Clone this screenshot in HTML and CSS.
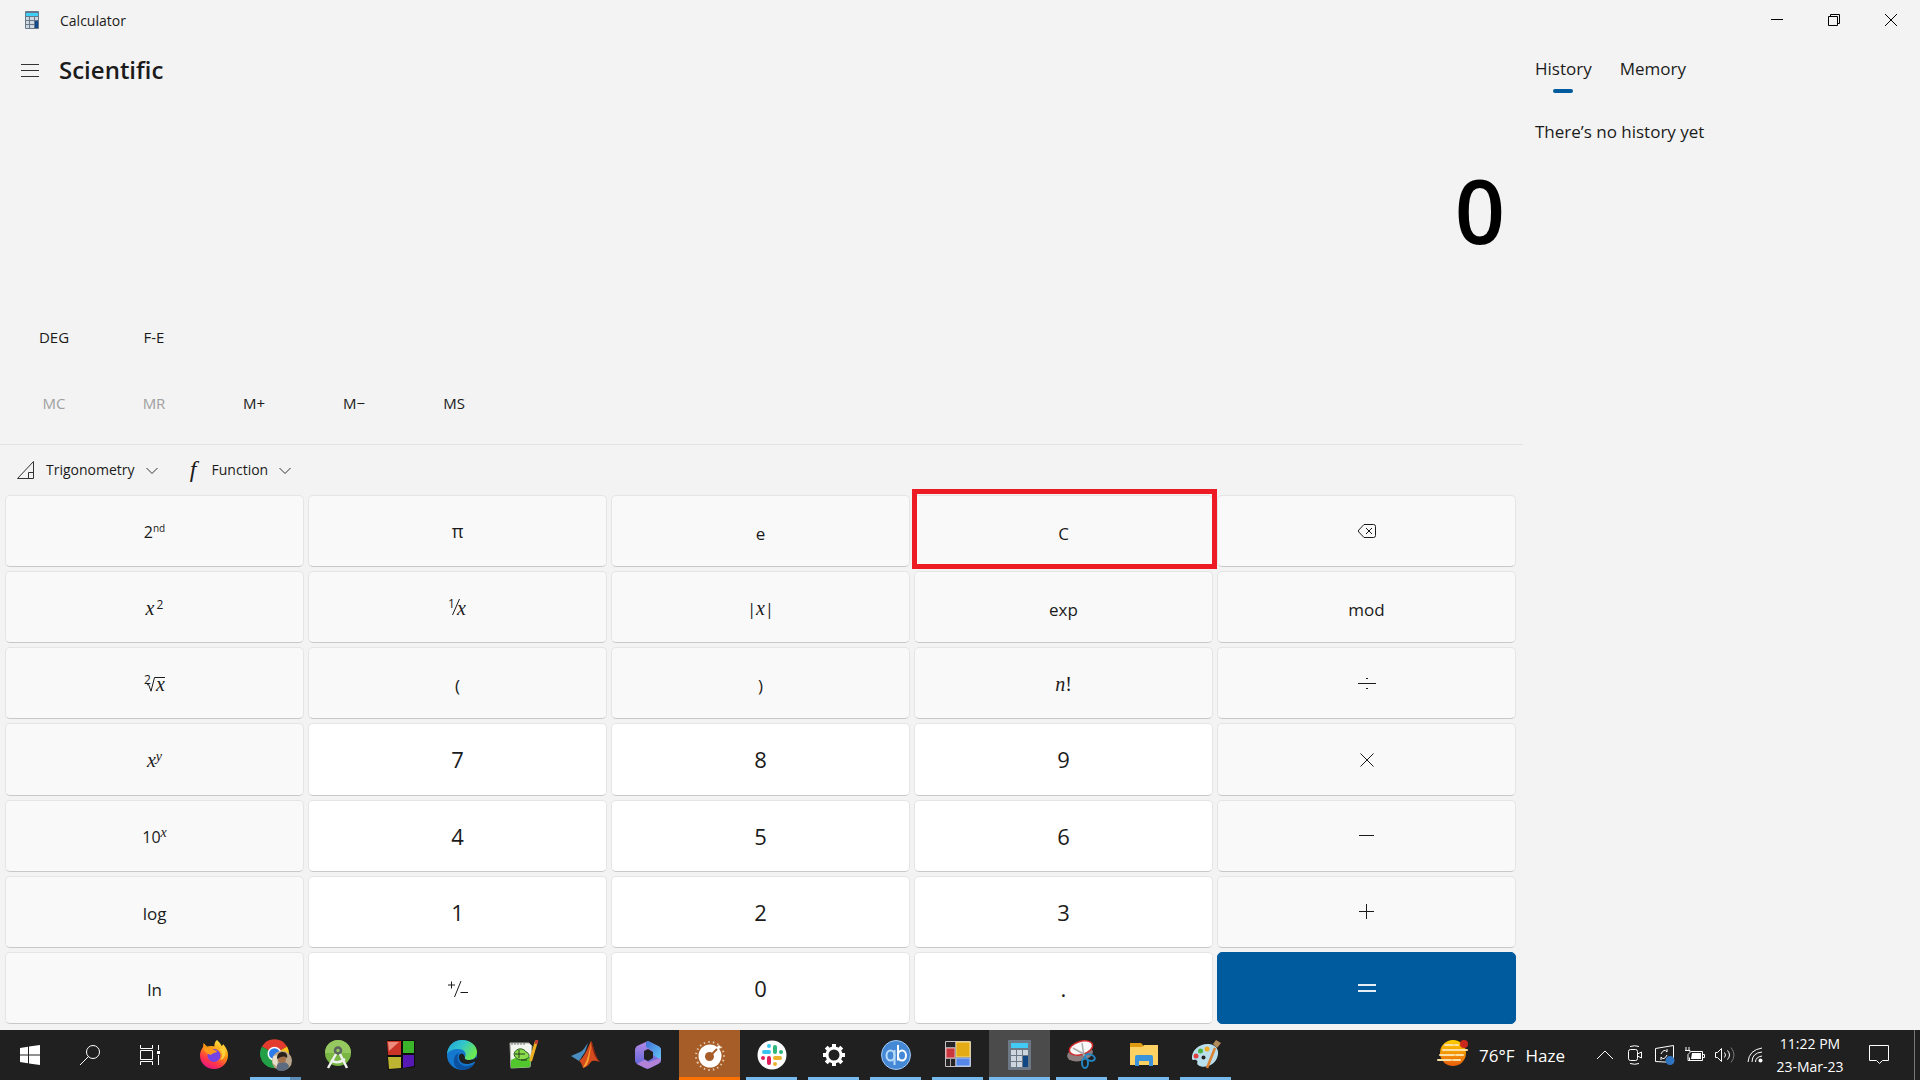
FILE: index.html
```html
<!DOCTYPE html>
<html lang="en">
<head>
<meta charset="utf-8">
<title>Calculator</title>
<link rel="stylesheet" href="styles.css">
</head>
<body>
<div class="app">
  <header class="titlebar">
    <svg class="app-icon" width="14" height="18" viewBox="0 0 14 18">
      <rect width="14" height="18" rx="1" fill="#66788a"/>
      <rect x="1" y="2" width="12" height="3" fill="#3fd0fa"/>
      <path d="M1 6h3v3H1zM5 6h4v3H5zM10 6h3v3h-3zM1 10h3v3H1zM5 10h4v3H5zM1 14h3v3H1zM5 14h4v3H5z" fill="#cfd8e0"/>
      <path d="M10 10h3v7h-3z" fill="#124a8c"/>
    </svg>
    <span class="app-name">Calculator</span>
    <div class="window-controls">
      <button class="window-btn" aria-label="Minimize"><svg width="12" height="12" viewBox="0 0 12 12"><path d="M0 5.500h12"/></svg></button>
      <button class="window-btn" aria-label="Restore"><svg width="12" height="12" viewBox="0 0 12 12"><path d="M.5 2.500h9v9h-9zM2.500 2.500v-2h9v9h-2"/></svg></button>
      <button class="window-btn" aria-label="Close"><svg width="12" height="12" viewBox="0 0 12 12"><path d="M0 0l12 12M12 0L0 12"/></svg></button>
    </div>
  </header>

  <div class="content">
    <main class="calculator">
      <div class="nav">
        <button class="menu-btn" aria-label="Open navigation"><svg width="18" height="14" viewBox="0 0 18 14"><path d="M0 1.500h18M0 7.500h18M0 13.500h18"/></svg></button>
        <h1 class="mode">Scientific</h1>
      </div>
      <output class="display">0</output>
      <div class="toggles">
        <button class="flat-btn">DEG</button>
        <button class="flat-btn">F-E</button>
      </div>
      <div class="memory-row">
        <button class="flat-btn" disabled>MC</button>
        <button class="flat-btn" disabled>MR</button>
        <button class="flat-btn">M+</button>
        <button class="flat-btn">M−</button>
        <button class="flat-btn">MS</button>
      </div>
      <div class="menus">
        <button class="menu-drop">
          <svg width="19" height="19" viewBox="0 0 19 19"><path d="M1.500 18.500h16v-17zM12.500 18v-5.500h5"/></svg>
          Trigonometry
          <svg class="chevron" width="12" height="8" viewBox="0 0 12 8"><path d="M.5 1l5.500 5.500L11.500 1"/></svg>
        </button>
        <button class="menu-drop">
          <span class="fn">f</span>
          Function
          <svg class="chevron" width="12" height="8" viewBox="0 0 12 8"><path d="M.5 1l5.500 5.500L11.500 1"/></svg>
        </button>
      </div>
      <div class="keypad">
        <button class="key math"><span>2<sup class="tiny">nd</sup></span></button>
        <button class="key pi">π</button>
        <button class="key word">e</button>
        <button class="key word marked">C</button>
        <button class="key" aria-label="Backspace"><svg width="18" height="14" viewBox="0 0 18 14"><path d="M6 .5h9.500a2 2 0 0 1 2 2v9a2 2 0 0 1-2 2H6L.8 8a1.500 1.500 0 0 1 0-2zM8 4l6 6M14 4l-6 6"/></svg></button>

        <button class="key math"><span><i>x</i><sup>2</sup></span></button>
        <button class="key" aria-label="Reciprocal"><svg class="formula" width="20" height="20" viewBox="0 0 20 20"><text class="small" x="0" y="11">1</text><path d="M4.500 18L11.500 2"/><text class="var" x="9" y="18">x</text></svg></button>
        <button class="key math"><span>|<i>x</i>|</span></button>
        <button class="key word">exp</button>
        <button class="key word">mod</button>

        <button class="key" aria-label="Square root"><svg class="formula" width="22" height="20" viewBox="0 0 22 20"><text class="small" x="0" y="11">2</text><path d="M3 12l1.500-.8 2.500 7L10.500 4.500H21"/><text class="var" x="12" y="18">x</text></svg></button>
        <button class="key word">(</button>
        <button class="key word">)</button>
        <button class="key math"><span class="factorial"><i>n</i>!</span></button>
        <button class="key" aria-label="Divide"><svg width="18" height="18" viewBox="0 0 18 18"><path d="M0 9.500h18M8 4.500h2M8 14.500h2"/></svg></button>

        <button class="key math"><span><i>x</i><sup class="var-sup">y</sup></span></button>
        <button class="key digit">7</button>
        <button class="key digit">8</button>
        <button class="key digit">9</button>
        <button class="key" aria-label="Multiply"><svg width="18" height="18" viewBox="0 0 18 18"><path d="M2.500 3.500l13 13M15.500 3.500l-13 13"/></svg></button>

        <button class="key math"><span>10<sup class="var-sup">x</sup></span></button>
        <button class="key digit">4</button>
        <button class="key digit">5</button>
        <button class="key digit">6</button>
        <button class="key" aria-label="Minus"><svg width="18" height="18" viewBox="0 0 18 18"><path d="M1 8.500h15"/></svg></button>

        <button class="key word">log</button>
        <button class="key digit">1</button>
        <button class="key digit">2</button>
        <button class="key digit">3</button>
        <button class="key" aria-label="Plus"><svg width="18" height="18" viewBox="0 0 18 18"><path d="M1 8.500h15M8.500 1v15"/></svg></button>

        <button class="key word">ln</button>
        <button class="key digit" aria-label="Change sign"><svg class="formula" width="22" height="20" viewBox="0 0 22 20"><path d="M1 7h7M4.500 3.500v7M7.500 19L14 3M13.500 14.500h7.500"/></svg></button>
        <button class="key digit">0</button>
        <button class="key digit">.</button>
        <button class="key equals" aria-label="Equals"><svg width="18" height="18" viewBox="0 0 18 18"><path d="M0 6h18M0 12h18"/></svg></button>
      </div>
    </main>

    <aside class="side">
      <div class="tabs" role="tablist">
        <button class="tab active" role="tab" aria-selected="true">History</button>
        <button class="tab" role="tab" aria-selected="false">Memory</button>
      </div>
      <p class="empty">There’s no history yet</p>
    </aside>
  </div>
</div>

<footer class="taskbar">
  <div class="system">
    <button class="sys-btn" aria-label="Start"><svg width="20" height="20" viewBox="0 0 20 20"><path d="M0 3l8-1.200V9.500H0zM9 1.600L20 0v9.500H9zM0 10.500h8v7.700L0 17zM9 10.500h11V20L9 18.400z" fill="#fff"/></svg></button>
    <button class="sys-btn" aria-label="Search"><svg class="line" width="20" height="20" viewBox="0 0 20 20"><circle cx="13" cy="7" r="6.500"/><path d="M8.500 11.500L0 20"/></svg></button>
    <button class="sys-btn" aria-label="Task view"><svg class="line" width="20" height="20" viewBox="0 0 20 20"><path d="M.5 0v3.500h12V0M.5 5.500h12v9H.5zM.5 20v-3.500h12V20M18.500 0v5M18.500 10v10"/><path d="M17 6h3v3h-3z" fill="#fff" stroke="none"/></svg></button>
  </div>
  <div class="apps">
    <button class="task" aria-label="Firefox"><svg width="30" height="30" viewBox="0 0 30 30">
      <defs><linearGradient id="ff" x1=".8" y1="0" x2=".3" y2="1"><stop offset="0" stop-color="#fff44f"/><stop offset=".4" stop-color="#ff980e"/><stop offset=".75" stop-color="#ff3647"/><stop offset="1" stop-color="#e31587"/></linearGradient></defs>
      <path d="M18 0c2 2 4 4 4.500 6 1-.5 1.500-1 1.500-2 3 3 5 7 5 11 0 8-6 14-14 14S1 23 1 15.500C1 12 2.500 9 4 7l.5-4L8 6.500c3-1 6-.5 7.500 0C15 4 16 1.500 18 0z" fill="url(#ff)"/>
      <circle cx="15" cy="15.500" r="6.500" fill="#7542e5"/><path d="M4 8c4-2 9 0 11 2 2 0 3 1 3 2-2 1-5 1-6 3-3-1-6-2-8-7z" fill="#ff9a1c"/><path d="M20 9c4 3 4 8 1 11 5-1 7-7 4-12z" fill="#ffd23c"/></svg></button>
    <button class="task running grouped" aria-label="Chrome"><svg width="32" height="32" viewBox="0 0 32 32">
      <path d="M14.500 14.700L1.900 7.500a14.500 14.500 0 0 1 25.200 0z" fill="#e33b2e"/><path d="M14.500 14.700L1.900 7.500a14.500 14.500 0 0 0 12.600 21.700z" fill="#23a047"/><path d="M14.500 14.700l12.600-7.200a14.500 14.500 0 0 1-12.600 21.700z" fill="#fcc31e"/>
      <circle cx="14.500" cy="14.700" r="7" fill="#fff"/><circle cx="14.500" cy="14.700" r="5.500" fill="#2c7bea"/>
      <circle cx="22" cy="21.700" r="10" fill="#b9a58b"/><path d="M12.500 24a10 10 0 0 1 1-7l4-1v12z" fill="#e8dfc9"/><path d="M17 31c-1-5 1-8 5-8s7 2 7 5c-3 4-8 5-12 3z" fill="#5d6b80"/><circle cx="22" cy="20" r="4" fill="#a2724c"/><path d="M17 20c0-6 3-7 6-7s5 3 4 6c-4-3-6-1-10 1z" fill="#2a211c"/></svg></button>
    <button class="task" aria-label="Android Studio"><svg width="30" height="30" viewBox="0 0 30 30">
      <circle cx="15" cy="13" r="13" fill="#79b644"/><path d="M2 13a13 13 0 0 1 26 0z" fill="#95c95f"/>
      <circle cx="15" cy="10.500" r="3" fill="none" stroke="#5c6360" stroke-width="2.500"/><path d="M13 14L5 28M17 14l7 14M8 20c4 3 9 3 14-1" fill="none" stroke="#eef1ee" stroke-width="2.500"/></svg></button>
    <button class="task" aria-label="Color blocks"><svg width="30" height="30" viewBox="0 0 30 30">
      <path d="M2 0h28v27L3 30z" fill="#0d0d0d"/><path d="M2 1h14v14H3z" fill="#cb3327"/><path d="M18 1h11v12H18z" fill="#3bb32b"/><path d="M3 17h13v11L4 29z" fill="#bdb531"/><path d="M18 15h11v11l-11 2z" fill="#5619b4"/><path d="M3 2l11 0-10 9z" fill="#ed8b7c"/></svg></button>
    <button class="task" aria-label="Edge"><svg width="30" height="30" viewBox="0 0 30 30">
      <defs><linearGradient id="ed" x1="0" y1="0" x2="1" y2=".5"><stop offset="0" stop-color="#219fd9"/><stop offset=".5" stop-color="#32c5cc"/><stop offset="1" stop-color="#6ce851"/></linearGradient></defs>
      <circle cx="15" cy="15" r="15" fill="#1478cf"/><path d="M0 14C1 5 7 0 15 0c9 0 15 6 15 12 0 5-4 8-8 8-3 0-5-1-4-3 2-3 0-8-7-8C6 9 2 11 0 14z" fill="url(#ed)"/>
      <path d="M12 13c-3 4-1 12 6 13 4 .5 7-1 9.500-2.500C25 28 20 30 15 30 9 29 6 25 7 19c.5-3 2-5 5-6z" fill="#0c50a0"/><path d="M18 17c-2-5-5-4-6-1-1 6 6 11 15 6 1-.5 1.500 0 .5 1.500L31 21l-2-4c-2 3-5 3-8 3-2 0-4-1-3-3z" fill="#1f201f"/></svg></button>
    <button class="task" aria-label="Notepad++"><svg width="30" height="30" viewBox="0 0 30 30">
      <path d="M1 3h19l3 3-2 21-19 1z" fill="#f3f5ef" stroke="#b0b4ab"/><path d="M2 20c6-4 12-3 20-3l-1 10-19 1z" fill="#52c62d"/><path d="M3 3v2M6 3v2M9 3v2M12 3v2M15 3v2" stroke="#777"/><path d="M5 14c2-7 10-6 12-2 4 1 4 6 0 7-4 2-11 1-12-5z" fill="#8bdc4b" stroke="#2c5923"/><path d="M6 14h10M10 10v8M12 20h6" stroke="#243a20"/><path d="M27.500 1L21.500 21" stroke="#efb023" stroke-width="3"/><path d="M28 0l-1 4" stroke="#c13c34" stroke-width="3"/></svg></button>
    <button class="task" aria-label="MATLAB"><svg width="30" height="30" viewBox="0 0 30 30">
      <path d="M0 16l9-4c3-1 5-5 8-9l-3 9-6 9z" fill="#4a8dc0"/><path d="M8 21c4-2 9-13 12-20 2 1 4 17 9 21-4-1-7-2-9 0-3 4-5 5-8 6-1-3-2-6-4-7z" fill="#d64b1d"/><path d="M20 1c-1 9-3 18-8 27 5-2 7-8 8-27z" fill="#f6a534"/><path d="M20 1c2 1 4 17 9 21-5-4-7-9-9-21z" fill="#7e1e15"/></svg></button>
    <button class="task" aria-label="Microsoft 365"><svg width="30" height="30" viewBox="0 0 30 30">
      <defs><linearGradient id="ms" x1="0" y1="0" x2="0" y2="1"><stop offset="0" stop-color="#b58be6"/><stop offset="1" stop-color="#5560d8"/></linearGradient><linearGradient id="mt" x1="0" y1="0" x2="1" y2="1"><stop offset="0" stop-color="#3f6fd6"/><stop offset="1" stop-color="#63c8f5"/></linearGradient></defs>
      <path d="M15 1l10 5c2 1 3 2 3 4v10c0 2-1 3-3 4l-8 4c-2 1-3 1-5 0l-8-4c-1-1-2-2-2-4V10c0-2 1-3 2-4z" fill="url(#ms)"/><path d="M15 1l10 5c2 1 3 2 3 4v10l-8-5V11l-7-4V2z" fill="url(#mt)"/><path d="M4 24l7-4 5 2 11-4c2 3 0 5-2 6l-8 4c-2 1-3 1-5 0z" fill="#b182d8"/><path d="M11 11l4-2 5 3v6l-5 3-4-2z" fill="#1f201f"/></svg></button>
    <button class="task alert" aria-label="Timer"><svg width="30" height="30" viewBox="0 0 30 30">
      <circle cx="15" cy="17" r="14" fill="none" stroke="#e3c3a6" stroke-width="2" stroke-dasharray="1.500 3.100" pathLength="88" transform="rotate(150 15 17)"/><circle cx="15" cy="17" r="11.500" fill="#fff"/><path d="M15 17L25 7" stroke="#fff" stroke-width="3"/><circle cx="14.500" cy="17.500" r="4.500" fill="#a65d28"/><path d="M15 17l7-7" stroke="#a65d28" stroke-width="2"/></svg></button>
    <button class="task running" aria-label="Slack"><svg width="30" height="30" viewBox="0 0 30 30">
      <circle cx="15" cy="15" r="14.500" fill="#fff"/><g fill="none" stroke-width="4" stroke-linecap="round"><path d="M7 12h5M12 6h0" stroke="#36c5f0"/><path d="M18 7v5M24 12h0" stroke="#2eb67d"/><path d="M18 18h5M18 24h0" stroke="#ecb22e"/><path d="M12 18v5M6 18h0" stroke="#e01e5a"/></g></svg></button>
    <button class="task running" aria-label="Settings"><svg width="30" height="30" viewBox="0 0 30 30">
      <g fill="none" stroke="#fff"><circle cx="15" cy="15" r="7" stroke-width="3"/><path d="M15 4v4M15 22v4M4 15h4M22 15h4M7.200 7.200L10 10M20 20l2.800 2.800M7.200 22.800L10 20M20 10l2.800-2.800" stroke-width="4"/></g></svg></button>
    <button class="task running" aria-label="qBittorrent"><svg width="30" height="30" viewBox="0 0 30 30">
      <circle cx="15" cy="15" r="14.500" fill="#4588d6" stroke="#a4caf2"/><g fill="none" stroke-width="2"><ellipse cx="9.500" cy="15.500" rx="4" ry="5" stroke="#b8dbf8"/><path d="M13.500 10v15" stroke="#b8dbf8"/><path d="M17 5v15.500" stroke="#fff"/><ellipse cx="21" cy="15.500" rx="4" ry="5" stroke="#fff"/></g></svg></button>
    <button class="task running" aria-label="Layout tool"><svg width="30" height="30" viewBox="0 0 30 30">
      <path d="M2.500 1.500h25v25h-25z" fill="#252323" stroke="#c5c1c5"/><path d="M3 8h9v10H3z" fill="#c9363d" stroke="#e9b4b4"/><path d="M13 2h14v15H13z" fill="#e3ac16" stroke="#f0dc8e"/><path d="M13 18h14v8H13z" fill="#5587eb" stroke="#b5cbf5"/><path d="M12.500 2v24M3 18.500h9M7.500 19v7M3 7.500h9" stroke="#a5a1a5"/></svg></button>
    <button class="task running current" aria-label="Calculator"><svg width="30" height="30" viewBox="0 0 30 30">
      <rect x="3" width="23" height="30" rx="1" fill="#6d7986"/><path d="M6 3h17v5H6z" fill="#42c9f4"/><path d="M6 10h5v5H6zM12 10h5v5h-5zM18 10h5v5h-5zM6 16h5v5H6zM12 16h5v5h-5zM6 22h5v5H6zM12 22h5v5h-5z" fill="#cdd6de"/><path d="M18 16h5v11h-5z" fill="#114685"/></svg></button>
    <button class="task running" aria-label="Snipping Tool"><svg width="30" height="30" viewBox="0 0 30 30">
      <ellipse cx="13" cy="14" rx="13" ry="7" fill="#8b7d7e" transform="rotate(-12 13 14)"/><ellipse cx="14" cy="8" rx="12" ry="6.500" fill="#f8f8f8" stroke="#cf2d2d" stroke-width="1.500" transform="rotate(-17 14 8)"/><path d="M15 3l2 13M6 8l14 8" stroke="#aaa" stroke-width="1.500"/><g fill="none" stroke="#2385c3" stroke-width="2"><ellipse cx="23" cy="17.500" rx="5" ry="3" transform="rotate(20 23 17.500)"/><ellipse cx="18" cy="23" rx="3" ry="5"/></g></svg></button>
    <button class="task running" aria-label="File Explorer"><svg width="30" height="30" viewBox="0 0 30 30">
      <path d="M1 3h11l2 2v3H1z" fill="#e09b12"/><path d="M1 7h12l2-2h14v20H1z" fill="#fdd263"/><path d="M6 26v-9q0-2 2-2h14q2 0 2 2v9h-4v-5H10v5z" fill="#3994dc"/></svg></button>
    <button class="task running" aria-label="Paint"><svg width="30" height="30" viewBox="0 0 30 30">
      <path d="M1 19C0 10 9 3 18 4c8 1 11 7 8 14-3 8-14 11-19 7-2-2 1-4-2-5-1-1-3 1-4-1z" fill="#b9dfed"/><circle cx="5" cy="16" r="2.500" fill="#dd4140"/><circle cx="9.500" cy="11" r="2.500" fill="#4cb444"/><circle cx="16" cy="9" r="2.500" fill="#efac24"/><circle cx="12.500" cy="17.500" r="2" fill="#222"/><path d="M24 8l-8 20" stroke="#dd8031" stroke-width="2.500"/><path d="M22 4l3-4 5 3-4 5z" fill="#b38b5c"/></svg></button>
  </div>
  <div class="tray">
    <button class="weather">
      <svg width="30" height="30" viewBox="0 0 30 30"><defs><linearGradient id="sun" x1="0" y1="0" x2="0" y2="1"><stop offset="0" stop-color="#ffd000"/><stop offset="1" stop-color="#e85d0c"/></linearGradient></defs><circle cx="15" cy="13" r="13" fill="url(#sun)"/><path d="M7 5h8M17 5h3M5 10h24M2 15h14M18 15h7M0 20h13M15 20h7" stroke="#fae0a4" stroke-width="2" stroke-linecap="round"/><circle cx="26" cy="4" r="4" fill="#c9291d"/></svg>
      <span>76°F</span><span>Haze</span>
    </button>
    <button class="tray-btn" aria-label="Show hidden icons"><svg class="line" width="18" height="12" viewBox="0 0 18 12"><path d="M1 10l8-8 8 8"/></svg></button>
    <button class="tray-btn" aria-label="Meet now"><svg class="line" width="16" height="20" viewBox="0 0 16 20"><rect x="1.500" y="4.500" width="9" height="11" rx="2"/><path d="M10.500 9l4-2v6l-4-2M3 1.500q5-1.500 9 0M3 18.500q5 1.500 9 0"/></svg></button>
    <button class="tray-btn" aria-label="Windows Update"><svg class="line" width="22" height="20" viewBox="0 0 22 20"><path d="M1.500 3.500l18-3v17l-18-1zM7 9q3-6 6-2V4M13 10q-3 6-6 2v3"/><circle cx="16" cy="15.500" r="4.500" fill="#2f74c0" stroke="none"/></svg></button>
    <button class="tray-btn" aria-label="Battery"><svg class="line" width="20" height="16" viewBox="0 0 20 16"><path d="M5.500 4.500h12v9h-13v-3M17.500 7.500h2v3h-2M1 0v3M4 0v3M0 3.500h5v2l-2 2v6h3"/><path d="M7 6h9v6H6z" fill="#fff" stroke="none"/></svg></button>
    <button class="tray-btn" aria-label="Volume"><svg class="line" width="22" height="18" viewBox="0 0 22 18"><path d="M1.500 6.500h2l4-4v13l-4-4h-2zM10.500 6.500q2 2.500 0 5M13.500 4.500q4 4.500 0 9"/><path d="M17 1.500q6 7.500 0 15" stroke="#777"/></svg></button>
    <button class="tray-btn" aria-label="Network"><svg class="line" width="16" height="16" viewBox="0 0 16 16"><path d="M1 15Q2 3 15 1M5 15Q5 6 15 5M8.500 15q0-5 6.500-6" /><circle cx="13.500" cy="13.500" r="2" fill="#fff" stroke="none"/></svg></button>
    <button class="clock"><span>11:22 PM</span><span>23-Mar-23</span></button>
    <button class="notify" aria-label="Notifications"><svg class="line" width="20" height="20" viewBox="0 0 20 20"><path d="M.5.5h19v15h-6l-3 3-3-3h-7z"/></svg></button>
    <button class="show-desktop" aria-label="Show desktop"></button>
  </div>
</footer>
</body>
</html>
```
FILE: styles.css
```css
* { box-sizing: border-box; }

body {
  margin: 0;
  height: 100vh;
  display: flex;
  flex-direction: column;
  background: #f3f3f3;
  color: #1b1b1b;
  font-family: "Open Sans", "Noto Sans", sans-serif;
  font-size: 14px;
}

button {
  margin: 0;
  padding: 0;
  border: 0;
  background: none;
  color: inherit;
  font: inherit;
}

svg {
  display: block;
  flex: none;
  fill: none;
  overflow: visible;
}

.app {
  flex: 1;
  min-height: 0;
  display: flex;
  flex-direction: column;
}

/* Title bar */
.titlebar {
  height: 40px;
  display: flex;
  align-items: center;
  padding-left: 25px;
}
.app-name { margin-left: 21px; }
.window-controls { display: flex; margin: 0 1px 0 auto; }
.window-btn {
  width: 57px;
  height: 40px;
  display: grid;
  place-items: center;
}
.window-btn path { stroke: #000; }

.content { flex: 1; min-height: 0; display: flex; }
.calculator {
  flex: 1;
  min-width: 0;
  display: flex;
  flex-direction: column;
}

/* Mode heading */
.nav {
  height: 60px;
  display: flex;
  align-items: center;
  gap: 20px;
  padding-left: 21px;
}
.menu-btn path { stroke: #333; }
.mode {
  margin: 0;
  padding-bottom: 2px;
  font-size: 24px;
  font-weight: 600;
}

.display {
  height: 212px;
  padding: 50px 18px 0 0;
  color: #000;
  font-size: 88px;
  font-weight: 600;
  line-height: 120px;
  text-align: right;
}

.toggles, .memory-row {
  display: flex;
  align-items: center;
  padding-left: 4px;
  font-size: 15px;
}
.toggles { height: 50px; }
.memory-row {
  height: 83px;
  border-bottom: 1px solid #e3e3e3;
}
.flat-btn { width: 100px; height: 40px; }
.flat-btn:disabled { color: #a0a0a0; }

.menus {
  height: 50px;
  display: flex;
  align-items: center;
  gap: 28px;
  padding: 0 0 2px 16px;
}
.menu-drop {
  display: flex;
  align-items: center;
  gap: 11px;
}
.menu-drop path { stroke: #333; }
.menu-drop .chevron { margin-top: 4px; }
.fn {
  width: 15px;
  font: italic 24px/24px "Liberation Serif", serif;
}

/* Keys */
.keypad {
  flex: 1;
  display: grid;
  grid-template-columns: repeat(5, 1fr);
  grid-auto-rows: 1fr;
  gap: 4px;
  padding: 0 7px 6px 5px;
}
.key {
  position: relative;
  display: grid;
  place-items: center;
  border: 1px solid #e5e5e5;
  border-bottom-color: #c8c8c8;
  border-radius: 5px;
  background: #f9f9f9;
}
.key path { stroke: #1b1b1b; }
.word { padding-top: 4px; font-size: 17px; }
.pi { font-size: 18px; font-weight: 500; }
.digit { background: #fff; font-size: 22px; }
.equals { border-color: #005a9e; background: #005a9e; }
.equals path { stroke: #e6eef5; stroke-width: 2; }

.marked::after {
  content: "";
  position: absolute;
  inset: -7px -5px -3px -3px;
  border: 5px solid #ed1c24;
  z-index: 1;
}

.math { padding-top: 2px; font-size: 16px; line-height: 24px; }
.math i, .var, .factorial {
  font-family: "Liberation Serif", serif;
  font-size: 20px;
}
.math i, .var { font-style: italic; }
.math sup {
  margin-left: 2px;
  font-size: 12px;
  line-height: 1;
  vertical-align: 6px;
}
.math .tiny { margin-left: 0; font-size: 10px; }
.math .var-sup {
  margin-left: 0;
  font-family: "Liberation Serif", serif;
  font-size: 14px;
  font-style: italic;
}
.formula text { fill: #1b1b1b; stroke: none; }
.formula .small { font-size: 12px; }

/* History and memory */
.side { width: 397px; padding-left: 12px; font-size: 17px; }
.tabs { display: flex; gap: 28px; height: 64px; }
.tab {
  position: relative;
  height: 56px;
}
.tab.active::after {
  content: "";
  position: absolute;
  left: calc(50% - 10px);
  bottom: 3px;
  width: 20px;
  height: 4px;
  border-radius: 2px;
  background: #005a9e;
}
.empty { margin: 16px 0 0; line-height: 24px; }

/* Taskbar */
.taskbar {
  height: 50px;
  display: flex;
  justify-content: space-between;
  background: #1f201f;
  color: #fff;
}
.line { stroke: #fff; }
.system, .apps, .tray { display: flex; }
.sys-btn { width: 60px; display: grid; place-items: center; }
.apps { gap: 1px; margin-left: 3px; margin-right: auto; }
.task {
  position: relative;
  width: 61px;
  display: grid;
  place-items: center;
}
.running::after {
  content: "";
  position: absolute;
  left: 5px;
  right: 5px;
  bottom: 0;
  height: 3px;
  background: #76b9ed;
}
.grouped::after { background: linear-gradient(90deg, #76b9ed 40px, #5b8db6 40px); }
.current { background: #4b4b4b; }
.current::after { left: 0; right: 0; }
.alert { background: #a65d28; border-bottom: 3px solid #ff7100; }

.weather {
  display: flex;
  align-items: center;
  gap: 11px;
  margin-right: 25px;
  font-size: 17px;
}
.tray-btn { width: 30px; display: grid; place-items: center; }
.clock {
  width: 80px;
  display: flex;
  flex-direction: column;
  justify-content: center;
  align-items: center;
  line-height: 23px;
}
.notify { width: 58px; display: grid; place-items: center; }
.show-desktop { width: 6px; margin-left: 6px; border-left: 1px solid #777; }
```
